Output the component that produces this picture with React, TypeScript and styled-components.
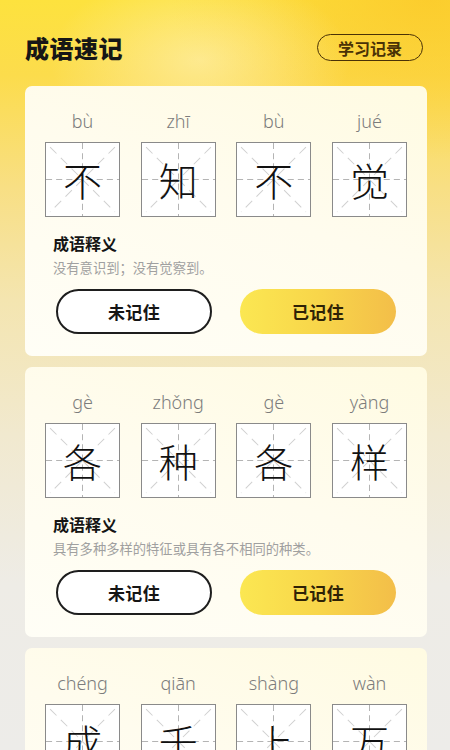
import React from "react";
import styled, { createGlobalStyle } from "styled-components";

const GlobalStyle = createGlobalStyle`
  html, body {
    margin: 0;
    padding: 0;
    scrollbar-width: none;
  }
  html::-webkit-scrollbar, body::-webkit-scrollbar { display: none; }
  body {
    font-family: "Noto Sans CJK SC", "Noto Sans", sans-serif;
    background: #edebe7;
  }
`;

const Page = styled.div`
  width: 450px;
  min-height: 750px;
  height: 750px;
  overflow: hidden;
  box-sizing: border-box;
  padding: 34px 23px 0 25px;
  background:
    radial-gradient(ellipse 150px 90px at 200px 60px, rgba(255, 244, 200, 0.55), rgba(255, 244, 200, 0) 100%),
    radial-gradient(ellipse 260px 160px at 430px 0px, rgba(251, 196, 38, 0.7), rgba(251, 196, 38, 0) 100%),
    linear-gradient(180deg, #fde23e 0%, #fcdc4c 10%, #f8df84 25%, #f4e5b0 40%, #f1e9cf 58%, #eeece6 78%, #edece9 100%);
`;

const Header = styled.div`
  display: flex;
  align-items: center;
  justify-content: space-between;
  height: 27px;
  margin-bottom: 25px;
`;

const Title = styled.h1`
  margin: 0;
  font-size: 24px;
  line-height: 27px;
  font-weight: 900;
  color: #161616;
  letter-spacing: 0.5px;
`;

const RecordButton = styled.button`
  box-sizing: border-box;
  width: 106px;
  height: 27px;
  border: 1.5px solid #4a3206;
  border-radius: 14px;
  background: transparent;
  color: #4a3206;
  font-family: "Noto Sans CJK SC", sans-serif;
  font-size: 16px;
  font-weight: 700;
  line-height: 1;
  padding: 0;
  margin-right: 4px;
  display: flex;
  align-items: center;
  justify-content: center;
`;

const CardList = styled.div`
  display: flex;
  flex-direction: column;
  gap: 11px;
`;

const Card = styled.section`
  box-sizing: border-box;
  width: 402px;
  height: 270px;
  border-radius: 7px;
  padding: 22px 20px 22px;
  background: linear-gradient(200deg, #fffbe2 0%, #fffcee 45%, #fffef6 100%);
  display: flex;
  flex-direction: column;
`;

const CharRow = styled.div`
  display: flex;
  justify-content: space-between;
`;

const CharColumn = styled.div`
  width: 75px;
  display: flex;
  flex-direction: column;
  align-items: center;
`;

const Pinyin = styled.div`
  font-family: "Noto Sans", "Open Sans", sans-serif;
  font-size: 18px;
  font-weight: 300;
  line-height: 26px;
  color: #7c7c7c;
  height: 26px;
  margin-bottom: 8px;
`;

const GridBox = styled.div`
  position: relative;
  box-sizing: border-box;
  width: 75px;
  height: 75px;
  border: 1.5px solid #8a8a8a;
  background: #ffffff;
  display: flex;
  align-items: center;
  justify-content: center;
`;

const GridLines = styled.svg`
  position: absolute;
  inset: 0;
  width: 100%;
  height: 100%;
`;

const Hanzi = styled.span`
  position: relative;
  font-family: "Noto Sans CJK SC", sans-serif;
  font-size: 39px;
  font-weight: 300;
  line-height: 1;
  color: #111111;
`;

const SectionTitle = styled.div`
  margin-top: 16px;
  padding-left: 8px;
  font-size: 16px;
  line-height: 20px;
  font-weight: 700;
  color: #151515;
`;

const Definition = styled.div`
  margin-top: 6px;
  padding-left: 8px;
  font-size: 13.3px;
  line-height: 18px;
  color: #a0a0a0;
`;

const ButtonRow = styled.div`
  margin-top: 12px;
  padding: 0 11px;
  display: flex;
  justify-content: space-between;
`;

const ActionButton = styled.button<{ $primary?: boolean }>`
  box-sizing: border-box;
  width: 156px;
  height: 45px;
  border-radius: 23px;
  font-family: "Noto Sans CJK SC", sans-serif;
  font-size: 17px;
  font-weight: 700;
  padding: 0;
  letter-spacing: 0.3px;
  border: ${(p) => (p.$primary ? "none" : "2px solid #1e1e1e")};
  background: ${(p) =>
    p.$primary ? "linear-gradient(90deg, #fbe752 0%, #f8d64a 50%, #f3be49 100%)" : "#ffffff"};
  color: ${(p) => (p.$primary ? "#2e2206" : "#151515")};
`;

const Grid = () => (
  <GridLines viewBox="0 0 72 72" preserveAspectRatio="none">
    <g stroke="#b4b4b4" strokeWidth="1" strokeDasharray="6 4" fill="none">
      <line x1="0" y1="36" x2="72" y2="36" />
      <line x1="36" y1="0" x2="36" y2="72" />
    </g>
    <g stroke="#d0d0d0" strokeWidth="1" strokeDasharray="9 6" fill="none">
      <line x1="4" y1="4" x2="68" y2="68" />
      <line x1="68" y1="4" x2="4" y2="68" />
    </g>
  </GridLines>
);

type Idiom = { chars: string[]; pinyin: string[]; meaning: string };

const idioms: Idiom[] = [
  { chars: ["不", "知", "不", "觉"], pinyin: ["bù", "zhī", "bù", "jué"], meaning: "没有意识到；没有觉察到。" },
  { chars: ["各", "种", "各", "样"], pinyin: ["gè", "zhǒng", "gè", "yàng"], meaning: "具有多种多样的特征或具有各不相同的种类。" },
  { chars: ["成", "千", "上", "万"], pinyin: ["chéng", "qiān", "shàng", "wàn"], meaning: "形容数量非常多。" },
];

export default function App() {
  return (
    <>
      <GlobalStyle />
      <Page>
        <Header>
          <Title>成语速记</Title>
          <RecordButton>学习记录</RecordButton>
        </Header>
        <CardList>
          {idioms.map((idiom, i) => (
            <Card key={i}>
              <CharRow>
                {idiom.chars.map((c, j) => (
                  <CharColumn key={j}>
                    <Pinyin>{idiom.pinyin[j]}</Pinyin>
                    <GridBox>
                      <Grid />
                      <Hanzi>{c}</Hanzi>
                    </GridBox>
                  </CharColumn>
                ))}
              </CharRow>
              <SectionTitle>成语释义</SectionTitle>
              <Definition>{idiom.meaning}</Definition>
              <ButtonRow>
                <ActionButton>未记住</ActionButton>
                <ActionButton $primary>已记住</ActionButton>
              </ButtonRow>
            </Card>
          ))}
        </CardList>
      </Page>
    </>
  );
}
